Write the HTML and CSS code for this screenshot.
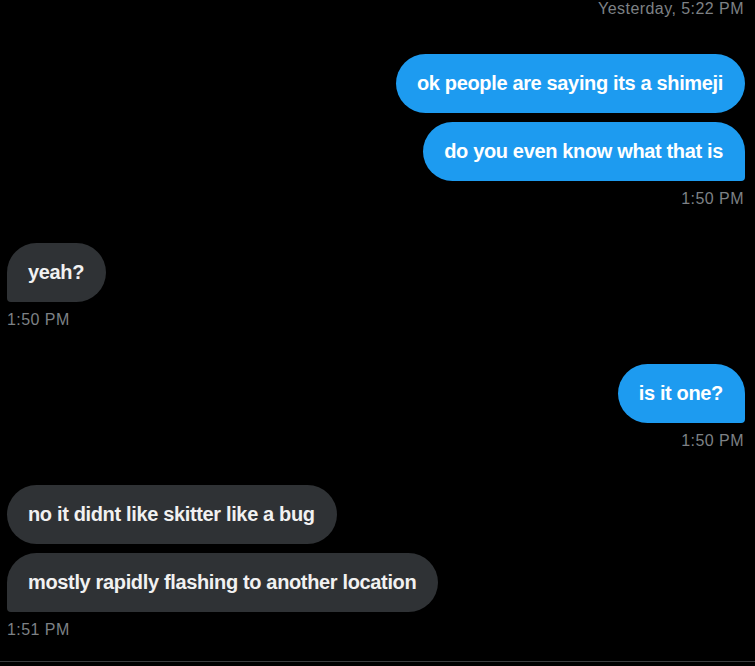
FILE: index.html
```html
<!DOCTYPE html>
<html lang="en">
<head>
<meta charset="utf-8">
<title>Messages</title>
<link rel="stylesheet" href="styles.css">
</head>
<body>
<main class="thread">
  <div class="stamp day">Yesterday, 5:22 PM</div>

  <section class="group out">
    <div class="bubble">ok people are saying its a shimeji</div>
    <div class="bubble tail">do you even know what that is</div>
    <div class="stamp">1:50 PM</div>
  </section>

  <section class="group in">
    <div class="bubble tail">yeah?</div>
    <div class="stamp">1:50 PM</div>
  </section>

  <section class="group out">
    <div class="bubble tail">is it one?</div>
    <div class="stamp">1:50 PM</div>
  </section>

  <section class="group in">
    <div class="bubble">no it didnt like skitter like a bug</div>
    <div class="bubble tail">mostly rapidly flashing to another location</div>
    <div class="stamp">1:51 PM</div>
  </section>
</main>
<footer class="composer-edge"></footer>
</body>
</html>
```

FILE: styles.css
```css
html, body {
  margin: 0;
  padding: 0;
  background: #000;
}

body {
  height: 666px;
  display: flex;
  flex-direction: column;
  overflow: hidden;
  font-family: "Liberation Sans", Arial, sans-serif;
}

.thread {
  flex: 1;
  display: flex;
  flex-direction: column;
  padding: 0 10px 0 7px;
}

.stamp {
  font-size: 16px;
  line-height: 18px;
  letter-spacing: 0.45px;
  color: #7d8185;
  white-space: nowrap;
}

.day {
  align-self: flex-end;
  margin-right: 1px;
}

.group {
  display: flex;
  flex-direction: column;
  gap: 9px;
  margin-top: 35px;
}

.day + .group {
  margin-top: 36px;
}

.group.out {
  align-items: flex-end;
}

.group.in {
  align-items: flex-start;
}

.bubble {
  box-sizing: border-box;
  height: 59px;
  padding: 16px 22px 16px 21px;
  border-radius: 30px;
  font-size: 20px;
  line-height: 27px;
  font-weight: 700;
  letter-spacing: -0.35px;
  color: #fff;
  white-space: nowrap;
}

.out .bubble {
  background: #1d9bf0;
}

.in .bubble {
  background: #2f3235;
  color: #f1f1f1;
}

.out .bubble.tail {
  border-bottom-right-radius: 4px;
}

.in .bubble.tail {
  border-bottom-left-radius: 4px;
}

.out .stamp {
  margin-right: 1px;
}

.composer-edge {
  height: 4px;
  border-top: 1px solid #3a3b3d;
}
```
